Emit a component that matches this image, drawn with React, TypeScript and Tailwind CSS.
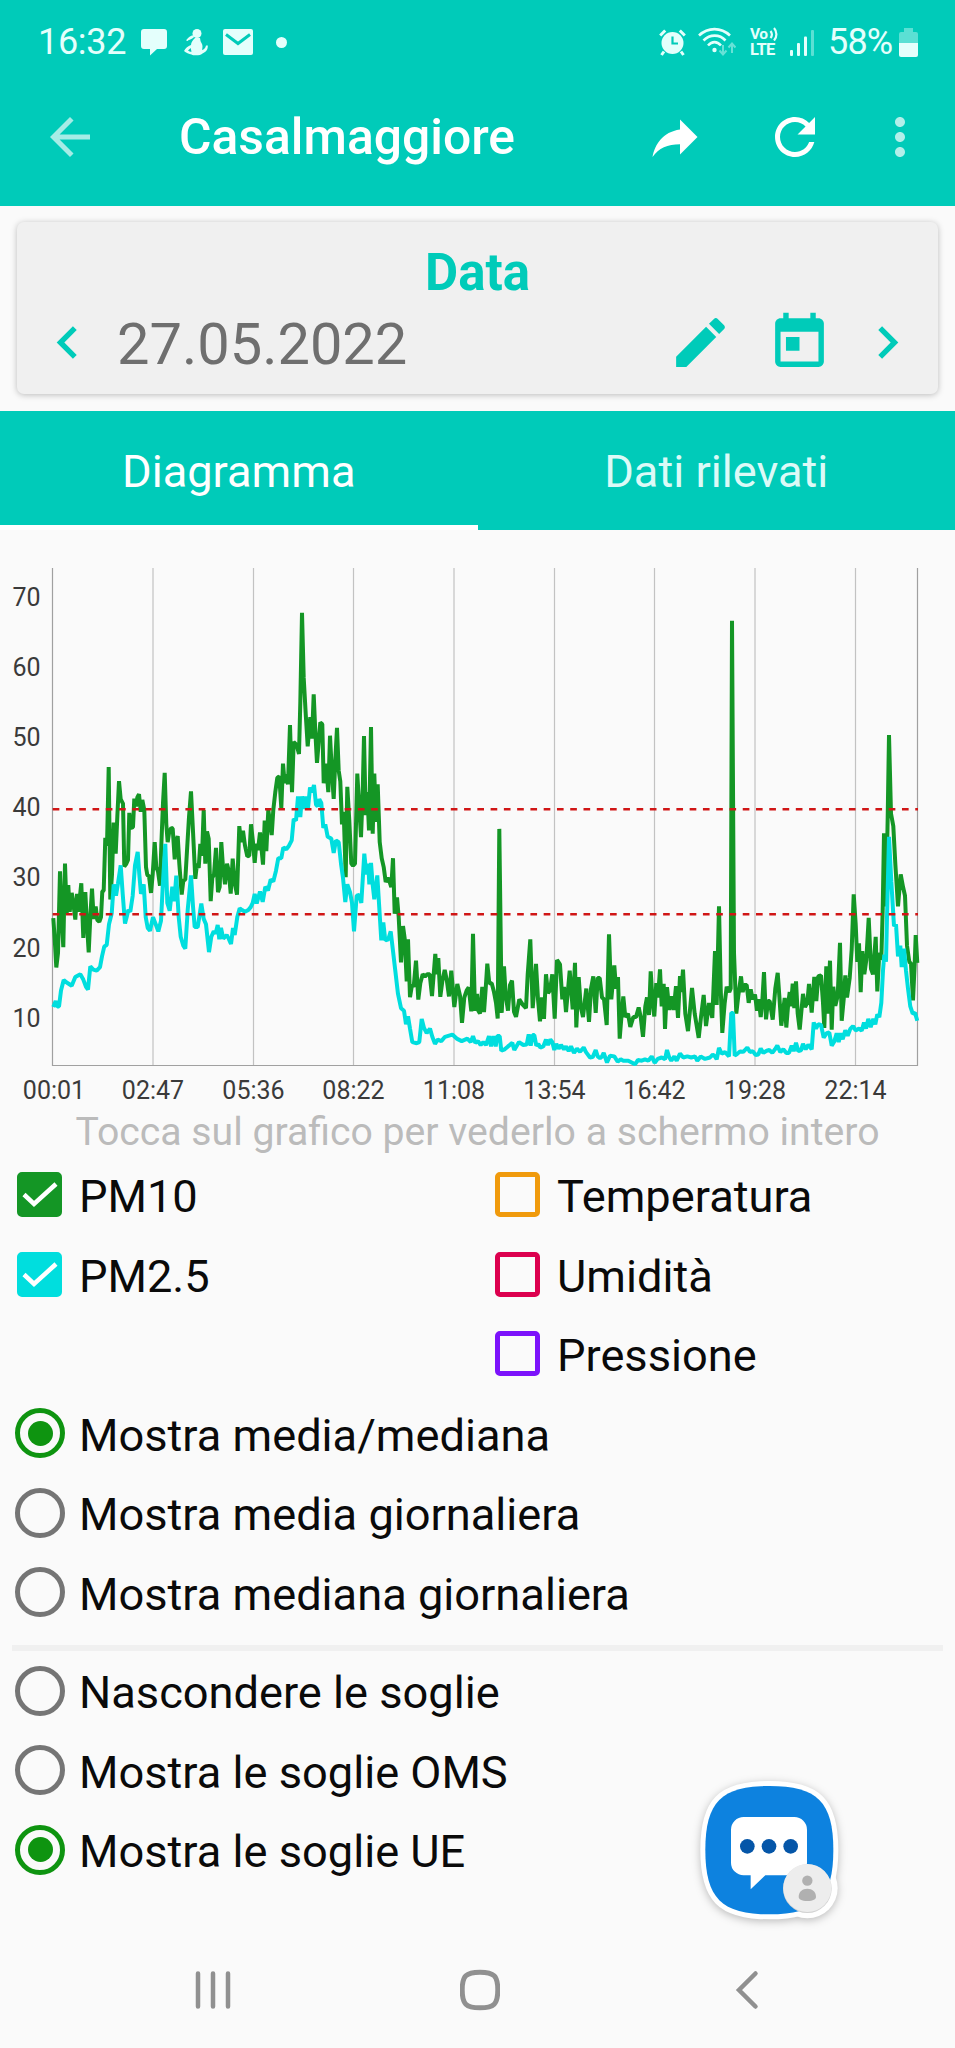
import { useState } from "react";
import { clsx } from "clsx";

type Point = [number, number];

interface Series {
  id: string;
  label: string;
  box: string;
  fill: string;
}

// Samples in plot units: 3 per pixel across, 2.8 per pixel down
const pm10: Point[] = [
  [160,1003],[164,1060],[169,1141],[174,1100],[180,872],[185,1000],[190,1084],[195,850],[200,990],[205,910],[209,985],[215,932],
  [220,960],[226,1007],[231,935],[235,985],[244,905],[250,1058],[256,930],[261,1020],[266,1099],[271,1000],[276,920],[281,1005],
  [287,970],[292,1008],[298,1013],[303,1000],[307,928],[311,926],[316,778],[321,800],[326,580],[331,951],[336,880],[341,735],
  [347,822],[352,720],[357,619],[362,670],[369,682],[373,858],[378,852],[384,840],[388,708],[393,750],[399,748],[403,668],
  [408,690],[412,665],[417,656],[422,705],[427,672],[433,700],[438,860],[442,882],[447,885],[453,932],[458,880],[464,790],
  [469,860],[474,872],[480,912],[484,800],[489,680],[494,596],[499,740],[503,790],[508,760],[514,750],[518,752],[524,838],
  [528,790],[533,773],[538,850],[545,937],[550,898],[556,895],[562,800],[567,720],[573,648],[579,760],[586,893],[591,850],
  [596,862],[601,795],[606,828],[611,700],[616,850],[621,760],[626,780],[632,955],[637,890],[642,880],[648,806],[654,930],
  [659,915],[664,790],[669,860],[675,908],[681,850],[686,870],[692,934],[698,836],[704,905],[711,937],[718,745],[723,790],
  [729,758],[735,800],[742,830],[748,828],[753,740],[759,790],[764,848],[769,795],[774,812],[780,763],[789,853],[794,730],
  [799,815],[805,700],[811,740],[815,770],[820,700],[826,650],[832,610],[838,606],[844,695],[849,570],[854,625],[859,600],
  [864,628],[870,462],[876,650],[881,510],[887,515],[892,525],[897,543],[901,400],[906,148],[911,330],[917,430],[923,522],
  [927,480],[931,440],[936,500],[941,376],[946,480],[951,568],[956,510],[961,455],[967,460],[971,625],[978,570],[985,650],
  [990,492],[996,600],[1001,669],[1006,560],[1011,470],[1016,590],[1021,620],[1026,740],[1031,705],[1037,888],[1042,635],
  [1048,730],[1054,850],[1059,856],[1065,850],[1072,598],[1077,680],[1083,776],[1088,650],[1092,493],[1097,714],[1102,650],
  [1107,757],[1113,468],[1118,766],[1123,598],[1128,733],[1133,628],[1139,790],[1145,835],[1151,860],[1157,902],[1163,890],
  [1169,902],[1174,916],[1179,835],[1184,990],[1191,945],[1196,1000],[1203,1127],[1209,1025],[1214,1060],[1220,1180],[1224,1062],
  [1230,1224],[1236,1190],[1241,1195],[1248,1122],[1255,1231],[1261,1185],[1268,1160],[1275,1166],[1282,1160],[1289,1160],
  [1296,1221],[1306,1103],[1310,1160],[1315,1115],[1321,1223],[1327,1180],[1334,1148],[1340,1175],[1347,1222],[1354,1150],
  [1363,1252],[1372,1187],[1380,1220],[1386,1296],[1393,1225],[1400,1205],[1406,1197],[1414,1264],[1419,1047],[1425,1262],
  [1431,1215],[1435,1262],[1440,1270],[1447,1195],[1452,1266],[1457,1200],[1462,1130],[1468,1185],[1475,1185],[1482,1210],
  [1488,1240],[1493,1284],[1498,753],[1505,1268],[1512,1138],[1517,1220],[1524,1262],[1530,1190],[1536,1178],[1542,1265],
  [1548,1279],[1558,1230],[1568,1245],[1578,1255],[1583,1160],[1591,1062],[1598,1255],[1603,1200],[1608,1131],[1614,1230],
  [1620,1292],[1626,1225],[1632,1285],[1638,1160],[1644,1213],[1650,1205],[1657,1160],[1664,1284],[1671,1120],[1680,1132],
  [1687,1230],[1692,1195],[1698,1266],[1709,1150],[1718,1258],[1725,1128],[1729,1309],[1736,1168],[1742,1250],[1749,1280],
  [1759,1200],[1767,1293],[1773,1200],[1780,1166],[1787,1268],[1793,1170],[1799,1170],[1806,1225],[1812,1230],[1820,1302],
  [1827,1048],[1834,1230],[1843,1135],[1848,1200],[1854,1168],[1859,1340],[1865,1270],[1870,1222],[1876,1280],[1884,1270],
  [1891,1307],[1900,1280],[1908,1280],[1916,1253],[1922,1280],[1929,1335],[1936,1250],[1941,1225],[1947,1274],[1952,1152],
  [1958,1240],[1963,1278],[1969,1185],[1974,1225],[1980,1146],[1985,1250],[1991,1187],[1995,1313],[2001,1196],[2008,1260],
  [2015,1222],[2021,1260],[2028,1193],[2034,1282],[2040,1165],[2044,1210],[2049,1147],[2056,1270],[2064,1319],[2070,1260],
  [2076,1198],[2084,1270],[2096,1338],[2103,1280],[2111,1218],[2118,1305],[2127,1240],[2137,1282],[2145,1095],[2150,1246],
  [2157,970],[2162,1200],[2167,1324],[2174,1240],[2180,1195],[2188,1210],[2192,1200],[2196,170],[2202,1100],[2209,1270],
  [2215,1220],[2223,1166],[2228,1210],[2233,1190],[2240,1190],[2246,1240],[2252,1202],[2258,1230],[2265,1217],[2271,1262],
  [2276,1230],[2282,1280],[2287,1235],[2292,1154],[2298,1286],[2304,1235],[2309,1235],[2318,1287],[2326,1200],[2333,1156],
  [2338,1220],[2344,1304],[2354,1226],[2359,1309],[2365,1240],[2369,1210],[2373,1250],[2378,1186],[2383,1255],[2388,1180],
  [2393,1270],[2399,1315],[2409,1215],[2415,1252],[2422,1240],[2427,1187],[2435,1267],[2443,1167],[2449,1235],[2455,1165],
  [2463,1163],[2469,1240],[2473,1310],[2479,1138],[2483,1270],[2490,1122],[2495,1315],[2500,1195],[2506,1248],[2513,1220],
  [2520,1072],[2525,1290],[2531,1230],[2536,1163],[2541,1225],[2549,1170],[2555,1090],[2561,936],[2567,1020],[2572,1125],
  [2577,1073],[2582,1210],[2587,1095],[2593,1160],[2599,1120],[2606,1002],[2613,1145],[2619,1160],[2627,1055],[2632,1208],
  [2638,1100],[2644,1120],[2648,980],[2652,765],[2658,970],[2663,720],[2667,490],[2673,710],[2680,745],[2686,850],[2694,970],
  [2702,880],[2709,915],[2715,940],[2721,1080],[2728,1125],[2733,1130],[2739,1233],[2744,1130],[2747,1050],[2752,1128],
];

const pm25: Point[] = [
  [160,1252],[167,1235],[172,1250],[177,1250],[183,1205],[191,1176],[200,1183],[215,1192],[226,1168],[241,1160],[250,1175],
  [258,1195],[264,1203],[271,1138],[280,1147],[290,1150],[300,1140],[306,1110],[313,1082],[320,1078],[327,1020],[335,990],
  [341,908],[348,940],[354,905],[362,855],[368,935],[375,1018],[380,1000],[385,980],[391,985],[398,940],[405,855],[413,817],
  [418,880],[423,935],[431,908],[437,1000],[443,1030],[450,1038],[459,1000],[467,1020],[475,1040],[483,1010],[489,900],
  [496,795],[502,960],[509,982],[517,915],[523,955],[529,884],[536,1000],[542,1055],[550,1080],[556,1088],[563,980],[573,883],
  [579,970],[584,1028],[593,1028],[604,962],[611,1005],[618,1020],[627,1098],[634,1055],[641,1040],[647,1045],[653,1022],
  [658,1062],[663,1030],[670,1060],[680,1050],[686,1060],[693,1075],[699,1030],[704,1050],[712,1000],[719,975],[726,980],
  [735,985],[745,980],[752,972],[758,960],[764,935],[770,962],[780,928],[788,957],[796,915],[804,925],[812,895],[820,900],
  [828,870],[835,835],[844,835],[850,805],[859,810],[867,800],[875,785],[881,725],[888,730],[894,662],[901,720],[906,662],
  [913,697],[918,662],[924,695],[930,637],[936,650],[942,630],[948,685],[953,690],[958,670],[964,680],[970,750],[976,740],
  [983,775],[994,780],[1001,820],[1008,785],[1016,790],[1023,850],[1029,890],[1036,958],[1042,908],[1050,930],[1056,960],
  [1062,1040],[1070,940],[1078,938],[1084,960],[1093,822],[1099,880],[1105,850],[1108,908],[1113,848],[1118,910],[1123,950],
  [1132,883],[1138,975],[1144,1065],[1150,1015],[1156,1065],[1165,1062],[1172,1040],[1179,1095],[1186,1150],[1194,1215],
  [1203,1255],[1212,1262],[1218,1300],[1224,1278],[1230,1312],[1237,1350],[1250,1353],[1258,1350],[1265,1285],[1272,1310],
  [1280,1325],[1290,1312],[1297,1335],[1305,1355],[1313,1343],[1324,1347],[1335,1335],[1357,1329],[1370,1340],[1385,1347],
  [1402,1340],[1412,1350],[1419,1333],[1426,1352],[1434,1347],[1442,1358],[1450,1350],[1458,1358],[1467,1333],[1473,1362],
  [1480,1333],[1487,1362],[1492,1333],[1499,1333],[1504,1374],[1514,1370],[1524,1362],[1537,1352],[1543,1372],[1557,1350],
  [1570,1358],[1580,1357],[1586,1328],[1592,1360],[1598,1330],[1603,1330],[1609,1360],[1615,1355],[1621,1365],[1630,1362],
  [1638,1343],[1644,1358],[1651,1343],[1657,1350],[1663,1372],[1669,1355],[1676,1368],[1683,1358],[1692,1370],[1698,1362],
  [1706,1375],[1713,1362],[1722,1380],[1731,1368],[1740,1377],[1751,1365],[1758,1378],[1770,1393],[1778,1392],[1787,1372],
  [1793,1390],[1800,1395],[1806,1390],[1811,1380],[1821,1407],[1830,1388],[1843,1390],[1853,1405],[1862,1398],[1870,1402],
  [1885,1402],[1895,1407],[1905,1412],[1914,1400],[1925,1402],[1935,1398],[1945,1402],[1955,1390],[1964,1408],[1973,1397],
  [1985,1393],[1995,1398],[2001,1372],[2008,1393],[2014,1402],[2023,1390],[2030,1402],[2040,1382],[2050,1393],[2062,1390],
  [2074,1393],[2085,1390],[2092,1402],[2102,1390],[2115,1397],[2130,1393],[2138,1385],[2145,1390],[2150,1398],[2157,1366],
  [2165,1382],[2175,1378],[2187,1390],[2194,1268],[2199,1268],[2204,1388],[2212,1383],[2220,1376],[2230,1377],[2242,1365],
  [2250,1378],[2258,1375],[2267,1386],[2275,1385],[2282,1368],[2290,1380],[2300,1374],[2308,1372],[2317,1380],[2325,1370],
  [2332,1360],[2341,1378],[2350,1370],[2359,1380],[2367,1380],[2375,1360],[2381,1375],[2388,1352],[2395,1375],[2403,1373],
  [2409,1355],[2417,1370],[2425,1357],[2435,1370],[2441,1295],[2448,1312],[2455,1300],[2463,1302],[2471,1337],[2480,1325],
  [2488,1323],[2495,1360],[2503,1348],[2510,1325],[2516,1350],[2522,1325],[2528,1342],[2536,1317],[2543,1332],[2551,1313],
  [2559,1305],[2567,1317],[2577,1312],[2585,1318],[2592,1295],[2598,1312],[2605,1285],[2612,1308],[2620,1285],[2626,1300],
  [2632,1272],[2638,1280],[2644,1240],[2649,1150],[2653,1105],[2658,1125],[2661,1000],[2667,775],[2674,900],[2682,1025],
  [2688,1020],[2694,1110],[2701,1080],[2705,1140],[2712,1088],[2718,1150],[2724,1200],[2731,1250],[2738,1270],[2745,1268],
  [2752,1290],
];

const gridLines = [
  { x: 153, label: "02:47" },
  { x: 253.5, label: "05:36" },
  { x: 353.5, label: "08:22" },
  { x: 454, label: "11:08" },
  { x: 554.5, label: "13:54" },
  { x: 654.5, label: "16:42" },
  { x: 755, label: "19:28" },
  { x: 855.5, label: "22:14" },
];

const leftSeries: Series[] = [
  { id: "pm10", label: "PM10", box: "border-[#149625]", fill: "bg-[#149625]" },
  { id: "pm25", label: "PM2.5", box: "border-[#00dede]", fill: "bg-[#00dede]" },
];

const rightSeries: Series[] = [
  { id: "temp", label: "Temperatura", box: "border-[#f09a0c]", fill: "bg-[#f09a0c]" },
  { id: "hum", label: "Umidità", box: "border-[#dc004e]", fill: "bg-[#dc004e]" },
  { id: "press", label: "Pressione", box: "border-[#7c12fb]", fill: "bg-[#7c12fb]" },
];

const averageOptions = ["Mostra media/mediana", "Mostra media giornaliera", "Mostra mediana giornaliera"];
const limitOptions = ["Nascondere le soglie", "Mostra le soglie OMS", "Mostra le soglie UE"];

const toPoints = (data: Point[]) =>
  data.map(([x, y]) => `${(x / 3).toFixed(1)},${(y / 2.8 + 560).toFixed(1)}`).join(" ");

const Icon = ({ d, className }: { d: string; className?: string }) => (
  <svg viewBox="0 0 24 24" className={clsx("shrink-0 fill-current", className)}>
    <path d={d} />
  </svg>
);

const StatusBar = () => (
  <div className="flex h-[68px] items-center pt-4 pr-[37px] pl-[38px] text-[36px] leading-none text-[#e4fffc]">
    <span className="w-[89px] tracking-[-0.3px]">16:32</span>
    <svg viewBox="0 0 26 27" className="ml-[14px] h-[27px] w-[26px] fill-current">
      <path d="M3 0h20a3 3 0 0 1 3 3v14a3 3 0 0 1-3 3h-7l-7 6.500v-6.500H3a3 3 0 0 1-3-3V3a3 3 0 0 1 3-3z" />
    </svg>
    <svg viewBox="0 0 24 27" className="ml-[17px] h-[27px] w-[24px] fill-current">
      <circle cx="13" cy="4.500" r="4.500" />
      <path d="M9.500 7.500c-1.500 2-4 2-7 4M3 11.500c2-3 4-4.500 7-4.500" stroke="currentColor" strokeWidth="1.500" />
      <path d="M11 9h5c.5 1.500 0 3 1.500 5 1.500 2 1 5 .5 7 2-.5 3.500-2 4-4.500l1.800 0C24 20 22.500 23 18.500 24.500 17 26.500 10 27 7.500 25.500 5 25 2 24 0 22c1.500-3 4-5 7-6 0-3 2-5 4-7zM4 21.500c1 .9 2.200 1.200 3.500 1.300L6.700 19z" />
    </svg>
    <svg viewBox="0 0 30 26" className="ml-[15px] h-[26px] w-[30px]">
      <rect width="30" height="26" rx="2" fill="currentColor" />
      <path d="M3 5.500l12 9 12-9" fill="none" stroke="#00cbb9" strokeWidth="3" />
    </svg>
    <span className="ml-[23px] size-[11px] rounded-full bg-[#e4fffc]" />

    <div className="ml-auto flex items-center">
      <svg viewBox="0 0 27 27" className="h-[27px] w-[27px]" fill="none" stroke="currentColor">
        <circle cx="13.500" cy="14" r="11" fill="currentColor" stroke="none" />
        <path d="M1.200 6.500l5-5M25.800 6.500l-5-5M5 22.500l-2.500 3.500M22 22.500l2.500 3.500" strokeWidth="3" />
        <path d="M13.500 7.500v7h5.500" stroke="#00cbb9" strokeWidth="2.200" />
      </svg>
      <svg viewBox="0 0 38 30" className="ml-[12px] h-[30px] w-[38px]" fill="none" stroke="currentColor">
        <path d="M1 8.500c9-8.500 22-8.500 31 0M5.500 13.500c6.500-6.500 16-6.500 22 0M10 18.500c4-4.500 9-4.500 13 0" strokeWidth="2.600" />
        <circle cx="16.500" cy="23" r="2.200" fill="currentColor" stroke="none" />
        <path d="M25 18v9M21.500 23.500l3.500 4 3.500-4M34 26v-9M30.500 20.500l3.500-4 3.500 4" strokeWidth="2" opacity=".45" />
      </svg>
      <div className="relative ml-[14px] flex w-[30px] flex-col leading-[15px] font-bold">
        <span className="text-[15.500px] tracking-[-0.5px]">Vo</span>
        <span className="text-[16.500px] tracking-[-0.6px]">LTE</span>
        <svg viewBox="0 0 10 14" className="absolute top-0 left-[19px] h-[14px] w-[10px]" fill="none" stroke="currentColor" strokeWidth="2.200">
          <path d="M1.500 4c1.600 2 1.600 5 0 7M5 1c3.200 3.500 3.200 9 0 12.500" />
        </svg>
      </div>
      <svg viewBox="0 0 24 27" className="ml-[10px] h-[27px] w-[24px] fill-current">
        <rect x="0" y="21" width="3" height="6" rx="1" />
        <rect x="7" y="14" width="3" height="13" rx="1" />
        <rect x="14" y="7.500" width="3" height="19.500" rx="1" />
        <rect x="21" y="1" width="3" height="26" rx="1" opacity=".4" />
      </svg>
      <span className="ml-[14px] w-[67px] tracking-[-0.800px]">58%</span>
      <svg viewBox="0 0 19 29" className="ml-[4px] h-[29px] w-[19px] fill-current">
        <path d="M5 0h9v4h3a2 2 0 0 1 2 2v9H0V6a2 2 0 0 1 2-2h3z" opacity=".4" />
        <path d="M0 15h19v12a2 2 0 0 1-2 2H2a2 2 0 0 1-2-2z" />
      </svg>
    </div>
  </div>
);

const AppBar = () => (
  <div className="flex h-[137.500px] items-center pr-[25px] pl-10 text-white">
    <Icon className="size-[60px] opacity-65" d="M20 11H7.830l5.590-5.590L12 4l-8 8 8 8 1.410-1.410L7.830 13H20v-2z" />
    <h1 className="ml-[79px] pt-[2px] text-[49.800px] leading-none font-medium">Casalmaggiore</h1>
    <Icon className="ml-auto size-[60px]" d="M14 9V5l7 7-7 7v-4.100c-5 0-8.500 1.600-11 5.100 1-5 4-10 11-11z" />
    <Icon
      className="ml-[60px] size-[60px]"
      d="M17.650 6.350C16.200 4.900 14.210 4 12 4c-4.420 0-7.990 3.580-7.990 8s3.570 8 7.990 8c3.730 0 6.840-2.550 7.730-6h-2.080c-.82 2.330-3.040 4-5.650 4-3.310 0-6-2.690-6-6s2.690-6 6-6c1.660 0 3.140.69 4.220 1.780L13 11h7V4l-2.350 2.350z"
    />
    <Icon
      className="ml-[45px] size-[60px] opacity-70"
      d="M12 8c1.100 0 2-.9 2-2s-.9-2-2-2-2 .9-2 2 .9 2 2 2zm0 2c-1.100 0-2 .9-2 2s.9 2 2 2 2-.9 2-2-.9-2-2-2zm0 6c-1.100 0-2 .9-2 2s.9 2 2 2 2-.9 2-2-.9-2-2-2z"
    />
  </div>
);

const DateCard = () => (
  <section className="mx-[17px] mt-[16.500px] mb-[17px] h-[172px] rounded-[7px] bg-[#f0f0f0] pt-[21px] text-[#00cbb9] shadow-[0_1px_6px_rgba(0,0,0,0.25)]">
    <h2 className="h-[60px] text-center text-[51px] leading-[60px] font-bold">Data</h2>
    <div className="flex h-[79px] items-center pr-[18px] pl-[18px]">
      <Icon className="size-[65px]" d="M15.410 7.410L14 6l-6 6 6 6 1.410-1.410L10.830 12z" />
      <span className="ml-[17px] pt-[4px] text-[57.800px] leading-none text-[#6f6f6f]">27.05.2022</span>
      <Icon
        className="ml-auto size-[65px]"
        d="M3 17.250V21h3.750L17.810 9.940l-3.750-3.750L3 17.250zM20.710 7.040c.39-.39.39-1.020 0-1.410l-2.340-2.340c-.39-.39-1.020-.39-1.410 0l-1.830 1.830 3.750 3.750 1.830-1.830z"
      />
      <Icon
        className="ml-[34px] size-[65px]"
        d="M19 3h-1V1h-2v2H8V1H6v2H5c-1.110 0-1.990.9-1.990 2L3 19c0 1.100.89 2 2 2h14c1.100 0 2-.9 2-2V5c0-1.100-.9-2-2-2zm0 16H5V8h14v11zM7 10h5v5H7v-5z"
      />
      <Icon className="ml-[23px] size-[65px]" d="M10 6L8.590 7.410 13.170 12l-4.580 4.590L10 18l6-6z" />
    </div>
  </section>
);

const Chart = () => (
  <svg viewBox="0 530 955 580" className="block h-[580px] w-[955px] font-[Roboto,sans-serif]">
    {gridLines.map(({ x }) => (
      <line key={x} x1={x} x2={x} y1="568" y2="1065" stroke="#c2c2c2" strokeWidth="1.200" />
    ))}
    <path d="M52.500 568V1065.500H917.500V568" fill="none" stroke="#a0a0a0" strokeWidth="1.200" />

    <polyline points={toPoints(pm10)} fill="none" stroke="#149625" strokeWidth="4" strokeLinejoin="bevel" />
    <polyline points={toPoints(pm25)} fill="none" stroke="#00dede" strokeWidth="4" strokeLinejoin="bevel" />

    {[809.3, 914.3].map((y) => (
      <line key={y} x1="52.700" x2="918" y1={y} y2={y} stroke="#d01616" strokeWidth="2.600" strokeDasharray="6.65 6.62" />
    ))}

    <g fill="#3a3a3a" fontSize="25">
      {[70, 60, 50, 40, 30, 20, 10].map((v, i) => (
        <text key={v} x="40.500" y={605.6 + i * 70.2} textAnchor="end">
          {v}
        </text>
      ))}
      <text x="54" y="1098.500" textAnchor="middle">
        00:01
      </text>
      {gridLines.map(({ x, label }) => (
        <text key={label} x={x} y="1098.500" textAnchor="middle">
          {label}
        </text>
      ))}
    </g>
  </svg>
);

const CheckRow = ({ item, checked, onToggle }: { item: Series; checked: boolean; onToggle: () => void }) => (
  <button type="button" onClick={onToggle} className="flex h-[79.500px] w-full items-center text-left">
    <span className={clsx("flex size-[45px] items-center justify-center rounded-[5px] border-5", item.box, checked && item.fill)}>
      {checked && (
        <svg viewBox="0 0 36 27" className="h-[27px] w-[36px] shrink-0">
          <path d="M2 13.500l10 9.500L34 3" fill="none" stroke="#fff" strokeWidth="4.500" />
        </svg>
      )}
    </span>
    <span className="ml-[17px] pt-1 text-[45.200px] leading-none">{item.label}</span>
  </button>
);

const RadioRow = ({ label, checked, onSelect }: { label: string; checked: boolean; onSelect: () => void }) => (
  <button type="button" onClick={onSelect} className="flex h-[79.500px] items-center pl-[15px] text-left">
    <span
      className={clsx(
        "flex size-[50px] items-center justify-center rounded-full border-5",
        checked ? "border-[#0e9410]" : "border-[#757575]"
      )}
    >
      {checked && <span className="size-[25px] rounded-full bg-[#0e9410]" />}
    </span>
    <span className="ml-[14px] pt-1 text-[45.200px] leading-none">{label}</span>
  </button>
);

const ChatBubble = () => (
  <svg
    viewBox="0 0 540 540"
    className="absolute top-[1760px] left-[680px] size-[180px] drop-shadow-[0_2px_4px_rgba(0,0,0,0.25)]"
  >
    <circle cx="382" cy="384" r="91" fill="#fff" />
    <path
      d="M268 78C412 78 460 126 460 270S412 463 268 463 76 414 76 270 124 78 268 78z"
      fill="#fff"
      stroke="#fff"
      strokeWidth="30"
    />
    <path d="M268 78C412 78 460 126 460 270S412 463 268 463 76 414 76 270 124 78 268 78z" fill="#0d82df" />
    <path d="M191 171h152a38 38 0 0 1 38 38v99a38 38 0 0 1-38 38h-87l-44 42v-42h-21a38 38 0 0 1-38-38v-99a38 38 0 0 1 38-38z" fill="#fff" />
    <g fill="#0556a8">
      <circle cx="202" cy="259" r="22" />
      <circle cx="267" cy="259" r="22" />
      <circle cx="332" cy="259" r="22" />
    </g>
    <circle cx="382" cy="386" r="73" fill="#d2d2d2" />
    <circle cx="382" cy="384" r="72" fill="#ededed" />
    <g fill="#b0b0b0">
      <circle cx="382" cy="362" r="15.500" />
      <path d="M356 411c0-16 11-25 26-25s26 9 26 25c0 7-8 12-26 12s-26-5-26-12z" />
    </g>
  </svg>
);

const NavBar = () => (
  <nav className="mt-auto flex h-[117px] items-center justify-between pr-[188px] pl-[193px]">
    <svg viewBox="0 0 40 42" className="h-[42px] w-10" stroke="#909090" strokeWidth="4.500" strokeLinecap="round">
      <path d="M5 4.500v33M20 4.500v33M35 4.500v33" />
    </svg>
    <svg viewBox="0 0 40 42" className="h-[42px] w-10" fill="none" stroke="#909090" strokeWidth="5">
      <path d="M20 3.200C34 3.200 37.800 7 37.800 21S34 38.800 20 38.800 2.200 35 2.200 21 6 3.200 20 3.200z" />
    </svg>
    <svg viewBox="0 0 40 42" className="h-[42px] w-10" fill="none" stroke="#909090" strokeWidth="4.500" strokeLinecap="round">
      <path d="M28.500 4.500L12 21l16.500 16.500" />
    </svg>
  </nav>
);

export default function App() {
  const [tab, setTab] = useState("Diagramma");
  const [active, setActive] = useState<string[]>(["pm10", "pm25"]);
  const [average, setAverage] = useState(averageOptions[0]);
  const [limit, setLimit] = useState(limitOptions[2]);

  const toggle = (id: string) =>
    setActive((prev) => (prev.includes(id) ? prev.filter((s) => s !== id) : [...prev, id]));

  return (
    <div className="relative flex h-[2048px] w-[955px] flex-col overflow-hidden bg-[#fafafa] font-[Roboto,sans-serif] text-[#0a0a0a]">
      <header className="bg-[#00cbb9]">
        <StatusBar />
        <AppBar />
      </header>

      <DateCard />

      {/* Tabs */}
      <div className="flex h-[119px] shrink-0 bg-[#00cbb9]">
        {["Diagramma", "Dati rilevati"].map((name) => (
          <button
            key={name}
            type="button"
            onClick={() => setTab(name)}
            className={clsx(
              "flex-1 border-b-5 pt-[8px] text-[45.200px] leading-none",
              tab === name ? "border-white text-white" : "border-transparent text-[#dcfaf7]"
            )}
          >
            {name}
          </button>
        ))}
      </div>

      <Chart />
      <p className="h-[45px] text-center text-[39.200px] leading-[45px] whitespace-nowrap text-[#bbbbbb]">
        Tocca sul grafico per vederlo a schermo intero
      </p>

      {/* Series */}
      <div className="grid grid-cols-2 pl-[17px]">
        <div className="flex flex-col">
          {leftSeries.map((s) => (
            <CheckRow key={s.id} item={s} checked={active.includes(s.id)} onToggle={() => toggle(s.id)} />
          ))}
        </div>
        <div className="flex flex-col pl-[9px]">
          {rightSeries.map((s) => (
            <CheckRow key={s.id} item={s} checked={active.includes(s.id)} onToggle={() => toggle(s.id)} />
          ))}
        </div>
      </div>

      <div className="flex flex-col">
        {averageOptions.map((o) => (
          <RadioRow key={o} label={o} checked={average === o} onSelect={() => setAverage(o)} />
        ))}
      </div>
      <div className="mx-3 mt-[13px] h-[6px] shrink-0 bg-[#f0f0f0]" />
      <div className="flex flex-col">
        {limitOptions.map((o) => (
          <RadioRow key={o} label={o} checked={limit === o} onSelect={() => setLimit(o)} />
        ))}
      </div>

      <NavBar />
      <ChatBubble />
    </div>
  );
}
